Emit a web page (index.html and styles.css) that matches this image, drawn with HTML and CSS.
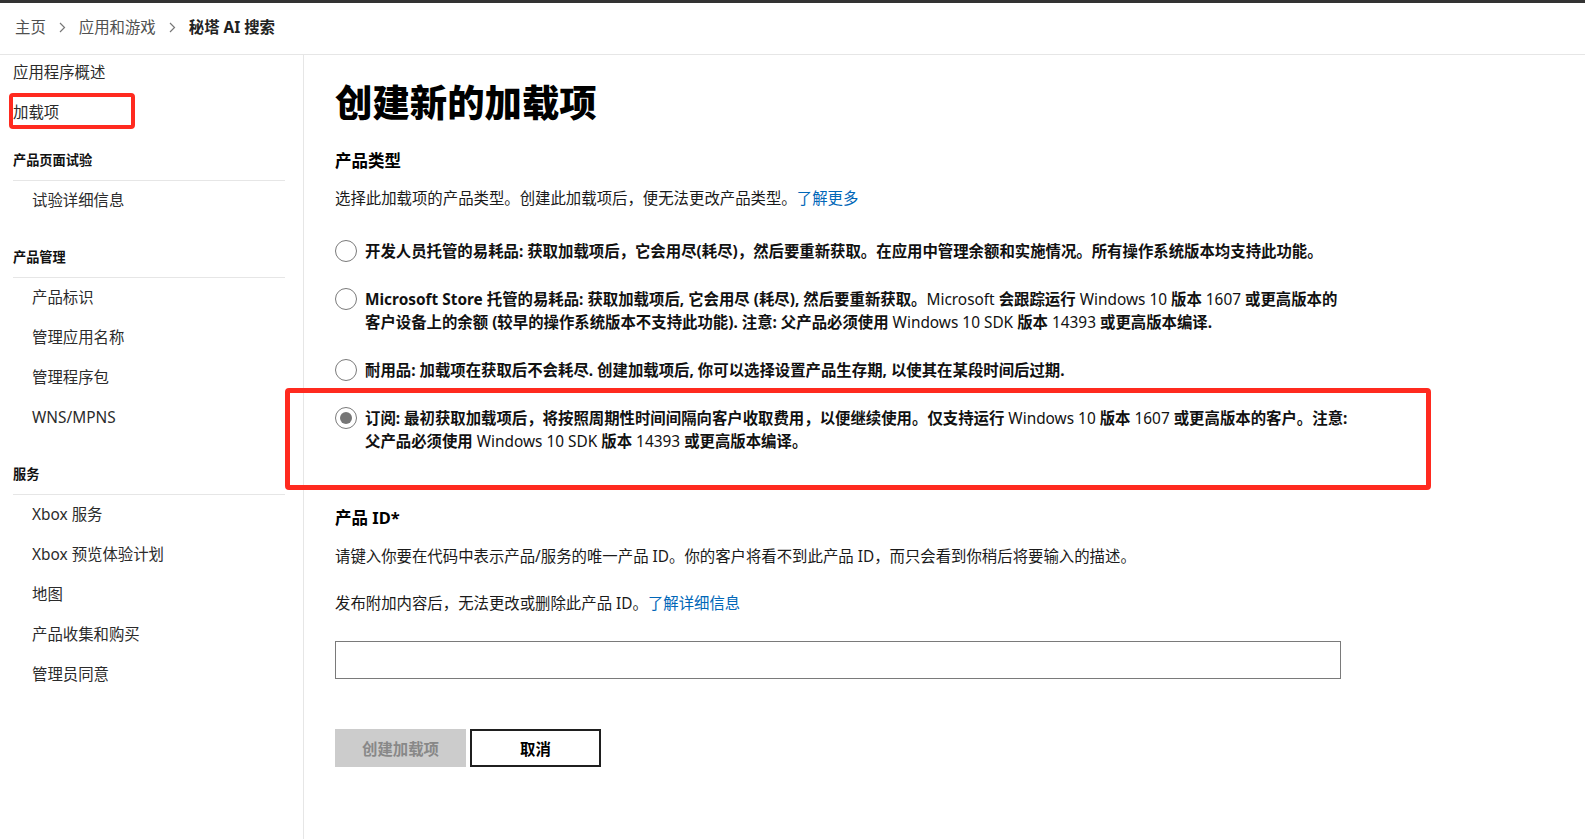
FILE: index.html
```html
<!DOCTYPE html>
<html lang="zh-CN">
<head>
<meta charset="utf-8">
<title>创建新的加载项</title>
<link rel="stylesheet" href="styles.css">
</head>
<body>
<div class="page">
  <div class="topbar"></div>
  <nav class="breadcrumb">
    <a class="crumb" href="#">主页</a>
    <svg class="chev" width="7" height="11" viewBox="0 0 7 11"><path d="M1 1l4.5 4.5L1 10" fill="none" stroke="#777" stroke-width="1.2"/></svg>
    <a class="crumb" href="#">应用和游戏</a>
    <svg class="chev" width="7" height="11" viewBox="0 0 7 11"><path d="M1 1l4.5 4.5L1 10" fill="none" stroke="#777" stroke-width="1.2"/></svg>
    <span class="crumb current">秘塔 AI 搜索</span>
  </nav>

  <div class="layout">
    <aside class="sidebar">
      <ul class="nav">
        <li><a class="nav-link" href="#">应用程序概述</a></li>
        <li><a class="nav-link" href="#">加载项</a></li>
      </ul>
      <div class="nav-group">
        <div class="nav-head">产品页面试验</div>
        <a class="nav-sub" href="#">试验详细信息</a>
      </div>
      <div class="nav-group">
        <div class="nav-head">产品管理</div>
        <a class="nav-sub" href="#">产品标识</a>
        <a class="nav-sub" href="#">管理应用名称</a>
        <a class="nav-sub" href="#">管理程序包</a>
        <a class="nav-sub" href="#">WNS/MPNS</a>
      </div>
      <div class="nav-group">
        <div class="nav-head">服务</div>
        <a class="nav-sub" href="#">Xbox 服务</a>
        <a class="nav-sub" href="#">Xbox 预览体验计划</a>
        <a class="nav-sub" href="#">地图</a>
        <a class="nav-sub" href="#">产品收集和购买</a>
        <a class="nav-sub" href="#">管理员同意</a>
      </div>
    </aside>

    <main class="main">
      <div class="content">
        <h1 class="title">创建新的加载项</h1>

        <h2 class="section-title">产品类型</h2>
        <p class="desc">选择此加载项的产品类型。创建此加载项后，便无法更改产品类型。<a class="link" href="#">了解更多</a></p>

        <div class="options">
          <label class="option">
            <span class="radio"></span>
            <span class="option-text">开发人员托管的易耗品: 获取加载项后，它会用尽(耗尽)，然后要重新获取。在应用中管理余额和实施情况。所有操作系统版本均支持此功能。</span>
          </label>
          <label class="option">
            <span class="radio"></span>
            <span class="option-text">Microsoft Store 托管的易耗品: 获取加载项后, 它会用尽 (耗尽), 然后要重新获取。<span class="lat">Microsoft</span> 会跟踪运行 <span class="lat">Windows 10</span> 版本 <span class="lat">1607</span> 或更高版本的客户设备上的余额 (较早的操作系统版本不支持此功能). 注意: 父产品必须使用 <span class="lat">Windows 10 SDK</span> 版本 <span class="lat">14393</span> 或更高版本编译.</span>
          </label>
          <label class="option">
            <span class="radio"></span>
            <span class="option-text">耐用品: 加载项在获取后不会耗尽. 创建加载项后, 你可以选择设置产品生存期, 以使其在某段时间后过期.</span>
          </label>
          <label class="option">
            <span class="radio checked"></span>
            <span class="option-text">订阅: 最初获取加载项后，将按照周期性时间间隔向客户收取费用，以便继续使用。仅支持运行 <span class="lat">Windows 10</span> 版本 <span class="lat">1607</span> 或更高版本的客户。注意: 父产品必须使用 <span class="lat">Windows 10 SDK</span> 版本 <span class="lat">14393</span> 或更高版本编译。</span>
          </label>
        </div>

        <h2 class="section-title id-title">产品 ID*</h2>
        <p class="desc id-desc">请键入你要在代码中表示产品/服务的唯一产品 ID。你的客户将看不到此产品 ID，而只会看到你稍后将要输入的描述。</p>
        <p class="desc id-desc2">发布附加内容后，无法更改或删除此产品 ID。<a class="link" href="#">了解详细信息</a></p>

        <input class="text-input" type="text" aria-label="产品 ID">

        <div class="actions">
          <button class="btn btn-disabled" type="button" disabled>创建加载项</button>
          <button class="btn btn-outline" type="button">取消</button>
        </div>
      </div>
    </main>
  </div>

  <div class="mark mark-nav"></div>
  <div class="mark mark-option"></div>
</div>
</body>
</html>
```

FILE: styles.css
```css
* { box-sizing: border-box; }

html, body {
  margin: 0;
  padding: 0;
  background: #fff;
}

body {
  font-family: "Noto Sans", "Noto Sans CJK SC", sans-serif;
  font-size: 15.4px;
  color: #1a1a1a;
}

.page {
  position: relative;
  min-height: 840px;
}

.topbar {
  height: 3px;
  background: #333;
}

.breadcrumb {
  height: 52px;
  display: flex;
  align-items: center;
  gap: 13px;
  padding: 0 0 2px 15px;
  border-bottom: 1px solid #e6e6e6;
  line-height: 20px;
}

.crumb {
  color: #505050;
  text-decoration: none;
}

.crumb.current {
  color: #222;
  font-weight: 700;
}

.chev { display: block; }

.layout {
  display: flex;
}

.sidebar {
  flex: none;
  width: 304px;
  min-height: 784px;
  border-right: 1px solid #e6e6e6;
  padding: 0 18px 0 13px;
}

.nav {
  list-style: none;
  margin: -2px 0 0;
  padding: 0;
}

.nav-link {
  display: block;
  padding: 10px 0;
  line-height: 20px;
  color: #2b2b2b;
  text-decoration: none;
}

.nav-group {
  margin-top: 17px;
}

.nav-group + .nav-group {
  margin-top: 26px;
}

.nav-head {
  font-size: 13.2px;
  font-weight: 700;
  line-height: 20px;
  color: #111;
  padding-bottom: 10px;
  border-bottom: 1px solid #e6e6e6;
}

.nav-sub {
  display: block;
  padding: 10px 0 10px 19px;
  line-height: 20px;
  color: #2b2b2b;
  text-decoration: none;
}

.main {
  flex: 1;
  padding: 26px 0 0 31px;
}

.content {
  width: 1014px;
}

.title {
  margin: 0;
  font-size: 37.4px;
  line-height: 44px;
  font-weight: 900;
  color: #000;
}

.section-title {
  margin: 24px 0 0;
  font-size: 16.5px;
  line-height: 24px;
  font-weight: 700;
  color: #000;
}

.desc {
  margin: 15px 0 0;
  line-height: 22px;
  color: #1a1a1a;
}

.link {
  color: #0067b8;
  text-decoration: none;
}

.options {
  margin-top: 30px;
  display: flex;
  flex-direction: column;
  gap: 25px;
}

.option {
  display: flex;
  align-items: flex-start;
  gap: 8px;
  line-height: 23px;
  font-weight: 700;
  color: #111;
}

.option-text {
  flex: 1;
}

.lat {
  font-weight: 400;
}

.radio {
  flex: none;
  width: 22px;
  height: 22px;
  border: 1.5px solid #7a7a7a;
  border-radius: 50%;
  background: #fff;
  display: flex;
  align-items: center;
  justify-content: center;
}

.radio.checked::after {
  content: "";
  width: 12px;
  height: 12px;
  border-radius: 50%;
  background: #767676;
}

.id-title {
  margin-top: 53px;
}

.id-desc {
  margin-top: 16px;
}

.id-desc2 {
  margin-top: 25px;
}

.text-input {
  display: block;
  width: 1006px;
  height: 38px;
  margin-top: 26px;
  border: 1.5px solid #7a7a7a;
  background: #fff;
  font: inherit;
  padding: 0 8px;
}

.actions {
  display: flex;
  gap: 4px;
  margin-top: 50px;
}

.btn {
  width: 131px;
  height: 38px;
  font: inherit;
  font-weight: 700;
  font-size: 15.4px;
}

.btn-disabled {
  background: #ccc;
  color: #888;
  border: none;
}

.btn-outline {
  background: #fff;
  color: #000;
  border: 2px solid #1f1f1f;
}

.mark {
  position: absolute;
  border: 4.5px solid #ff2a1f;
  border-radius: 4px;
  pointer-events: none;
}

.mark-nav {
  left: 9px;
  top: 93px;
  width: 126px;
  height: 36px;
}

.mark-option {
  left: 285px;
  top: 388px;
  width: 1146px;
  height: 102px;
  border-width: 5px;
}
```
